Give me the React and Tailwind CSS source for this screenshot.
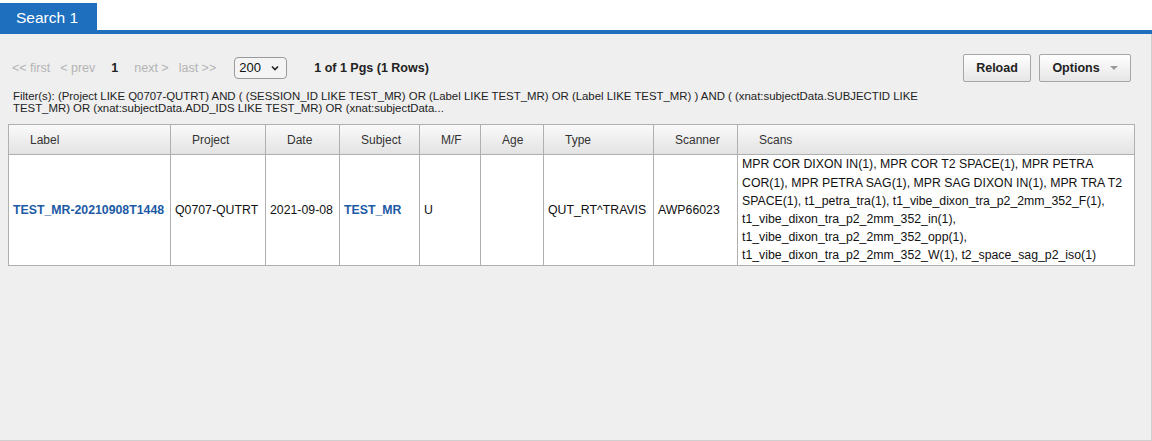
const columns = [
  { name: "Label", w: "w-[162px]" },
  { name: "Project", w: "w-[95px]" },
  { name: "Date", w: "w-[74px]" },
  { name: "Subject", w: "w-[80px]" },
  { name: "M/F", w: "w-[61px]" },
  { name: "Age", w: "w-[63px]" },
  { name: "Type", w: "w-[110px]" },
  { name: "Scanner", w: "w-[84px]" },
  { name: "Scans", w: "w-[397px]" },
]

const scans =
  "MPR COR DIXON IN(1), MPR COR T2 SPACE(1), MPR PETRA COR(1), MPR PETRA SAG(1), MPR SAG DIXON IN(1), MPR TRA T2 SPACE(1), t1_petra_tra(1), t1_vibe_dixon_tra_p2_2mm_352_F(1), t1_vibe_dixon_tra_p2_2mm_352_in(1), t1_vibe_dixon_tra_p2_2mm_352_opp(1), t1_vibe_dixon_tra_p2_2mm_352_W(1), t2_space_sag_p2_iso(1)"

function Pager() {
  return (
    <div className="flex items-center h-[26px] text-[12.5px]">
      <span className="text-[#b4b4b4] ml-[12px]">&lt;&lt; first</span>
      <span className="text-[#b4b4b4] ml-[10px]">&lt; prev</span>
      <span className="font-bold text-[#222] ml-[16px]">1</span>
      <span className="text-[#b4b4b4] ml-[16px]">next &gt;</span>
      <span className="text-[#b4b4b4] ml-[10px]">last &gt;&gt;</span>
      <div className="ml-[18px] w-[53px] h-[22px] border border-[#9a9a9a] rounded-[4px] bg-[#f4f4f4] flex items-center justify-between px-[4px] text-[13px] text-[#111]">
        <span>200</span>
        <svg width="10" height="10" viewBox="0 0 10 10" className="mr-[2px]">
          <path d="M2 3.5 L5 6.5 L8 3.5" fill="none" stroke="#222" strokeWidth="1.6" />
        </svg>
      </div>
      <span className="font-bold text-[#222] ml-[27px]">1 of 1 Pgs (1 Rows)</span>
    </div>
  )
}

const cell = "border border-[#b0b0b0] px-[4px] whitespace-nowrap"

export default function App() {
  return (
    <div className="w-[1152px] h-[441px] flex flex-col bg-white font-['Liberation_Sans',Arial,sans-serif]">
      {/* tab strip */}
      <div className="h-[30px] flex items-end">
        <div className="w-[97px] h-[27px] bg-[#1e6fbe] text-white text-[15.5px] flex items-center pl-[16px] pt-[2px]">
          Search 1
        </div>
      </div>
      <div className="h-[4px] bg-[#1e6fbe]" />

      <div className="flex-1 bg-[#efefef] border-r border-b border-[#cfcfcf] flex flex-col">
        {/* toolbar */}
        <div className="flex items-center justify-between mt-[20px] pr-[20px]">
          <Pager />
          <div className="flex gap-[8px]">
            <button className="w-[68px] h-[28px] border border-[#a6a6a6] rounded-[2px] bg-gradient-to-b from-white to-[#e6e6e6] text-[12.5px] font-bold text-[#222]">
              Reload
            </button>
            <button className="w-[92px] h-[28px] border border-[#a6a6a6] rounded-[2px] bg-gradient-to-b from-white to-[#e6e6e6] text-[12.5px] font-bold text-[#222] flex items-center justify-center gap-[10px]">
              Options
              <svg width="8" height="5" viewBox="0 0 8 5">
                <path d="M0 0 L8 0 L4 4 Z" fill="#999" />
              </svg>
            </button>
          </div>
        </div>

        {/* filters */}
        <p className="ml-[13px] mt-[8px] w-[912px] text-[11.4px] leading-[12px] text-[#222]">
          Filter(s): (Project LIKE Q0707-QUTRT) AND ( (SESSION_ID LIKE TEST_MR) OR (Label LIKE TEST_MR) OR (Label LIKE TEST_MR) ) AND ( (xnat:subjectData.SUBJECTID LIKE TEST_MR) OR (xnat:subjectData.ADD_IDS LIKE TEST_MR) OR (xnat:subjectData...
        </p>

        {/* results */}
        <table className="ml-[8px] mt-[10px] w-[1126px] border-collapse table-fixed text-[12.3px] text-[#111]">
          <thead>
            <tr className="h-[30px] bg-gradient-to-b from-[#fafafa] to-[#e2e2e2]">
              {columns.map((c) => (
                <th
                  key={c.name}
                  className={`${c.w} border border-[#b0b0b0] text-left font-normal pl-[21px] text-[12px] text-[#333]`}
                >
                  {c.name}
                </th>
              ))}
            </tr>
          </thead>
          <tbody>
            <tr className="h-[111px] bg-white">
              <td className={`${cell} font-bold text-[#1c5aa6]`}>TEST_MR-20210908T1448</td>
              <td className={cell}>Q0707-QUTRT</td>
              <td className={cell}>2021-09-08</td>
              <td className={`${cell} font-bold text-[#1c5aa6]`}>TEST_MR</td>
              <td className={cell}>U</td>
              <td className={cell}></td>
              <td className={cell}>QUT_RT^TRAVIS</td>
              <td className={cell}>AWP66023</td>
              <td className="border border-[#b0b0b0] pl-[4px] pr-[2px] leading-[18.2px] align-middle">{scans}</td>
            </tr>
          </tbody>
        </table>
      </div>
    </div>
  )
}
